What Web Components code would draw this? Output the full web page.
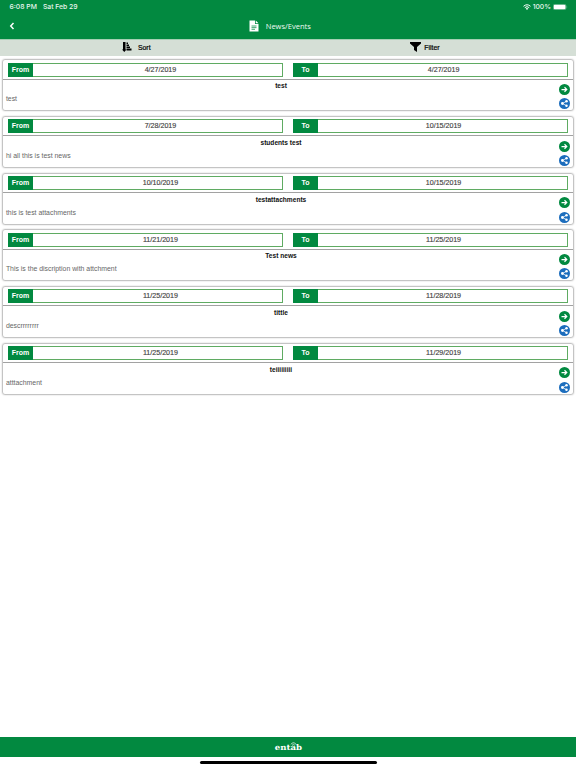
<!DOCTYPE html>
<html lang="en">
<head>
<meta charset="utf-8">
<title>News/Events</title>
<style>
  html, body {
    margin: 0;
    height: 768px;
    overflow: hidden;
    background: white;
    font-family: "Liberation Sans", Arial, sans-serif;
  }
</style>
</head>
<body>

<news-app>
  <status-bar slot="top" time="6:08 PM" date="Sat Feb 29" battery="100%"></status-bar>
  <title-bar slot="top">News/Events</title-bar>
  <tool-bar slot="top"></tool-bar>
  <news-card from="4/27/2019" to="4/27/2019" titulo="test">test</news-card>
  <news-card from="7/28/2019" to="10/15/2019" titulo="students test">hi all this is test news</news-card>
  <news-card from="10/10/2019" to="10/15/2019" titulo="testattachments">this is test attachments</news-card>
  <news-card from="11/21/2019" to="11/25/2019" titulo="Test news">This is the discription with attchment</news-card>
  <news-card from="11/25/2019" to="11/28/2019" titulo="tittle">descrrrrrrrr</news-card>
  <news-card from="11/25/2019" to="11/29/2019" titulo="teiiiiiiiii">atttachment</news-card>
  <brand-footer slot="bottom"></brand-footer>
</news-app>

<template id="news-app">
  <slot name="top"></slot>
  <main><slot></slot></main>
  <slot name="bottom"></slot>
  <style>
    :host {
      display: flex;
      flex-direction: column;
      height: 768px;
    }
    main {
      flex: 1;
      display: flex;
      flex-direction: column;
      gap: 4.7px;
      padding: 3.9px 2.4px 0;
    }
  </style>
</template>

<template id="status-bar">
  <span id="time"></span>
  <span id="date"></span>
  <svg class="wifi" viewBox="0 0 16 12" width="8" height="6">
    <path d="M1 4.6Q8-1.6 15 4.6M3.6 7.2Q8 3.4 12.4 7.2" fill="none" stroke="white" stroke-width="2"/>
    <path d="M5.4 9Q8 6.9 10.6 9L8 11.8z" fill="white"/>
  </svg>
  <span id="battery"></span>
  <svg viewBox="0 0 30 12" width="15" height="6">
    <rect x=".5" y=".5" width="25.5" height="11" rx="3" fill="none" stroke="#8fc9a8"/>
    <rect x="1.5" y="1.5" width="23.5" height="9" rx="2" fill="white"/>
    <path d="M27.5 4q2 2 0 4z" fill="#8fc9a8"/>
  </svg>
  <style>
    :host {
      display: flex;
      align-items: center;
      box-sizing: border-box;
      height: 14px;
      padding: 0 8px 0 9.5px;
      background: #028940;
      color: #e9f6ee;
      font: 500 6.8px/14px Inter, sans-serif;
    }
    #date { margin-left: 6px; }
    .wifi { margin-left: auto; }
    #battery { margin: 0 2px; }
  </style>
</template>

<template id="title-bar">
  <svg class="back" viewBox="0 0 12 16" width="6" height="8">
    <path d="M9 2L3.5 8L9 14" fill="none" stroke="white" stroke-width="3"/>
  </svg>
  <div>
    <svg viewBox="0 0 20 24" width="10" height="12">
      <path d="M1 1h11v7h7v15H1z" fill="white"/>
      <path d="M13.5 1L19 6.5h-5.5z" fill="white"/>
      <path d="M5 12h10M5 15.3h10M5 18.6h7" stroke="#028940" stroke-width="1.5"/>
    </svg>
    <slot></slot>
  </div>
  <style>
    :host {
      display: grid;
      grid-template-columns: 1fr auto 1fr;
      align-items: center;
      box-sizing: border-box;
      height: 24.5px;
      padding: 0 25px 0 9px;
      background: #028940;
      color: #f1faf4;
      font: 7.5px/24px "Open Sans", sans-serif;
    }
    div {
      display: flex;
      align-items: center;
      gap: 6.5px;
    }
  </style>
</template>

<template id="tool-bar">
  <div class="sort">
    <svg viewBox="0 0 20 20" width="10" height="10">
      <path d="M2 0h5v15h2l-4.5 5L0 15h2z"/>
      <path d="M9 1h3v3H9zM9 5h5v3H9zM9 9h7v3H9zM9 13h10v4H9z"/>
    </svg>
    Sort
  </div>
  <div class="filter">
    <svg viewBox="0 0 22 20" width="11" height="10">
      <path d="M0 0h22v3l-8 7v10l-6-4v-6L0 3z"/>
    </svg>
    Filter
  </div>
  <style>
    :host {
      display: grid;
      grid-template-columns: 1fr 1fr;
      box-sizing: border-box;
      height: 17px;
      background: #d5dfd6;
      border-top: 1px solid #a5cfb3;
      color: black;
      font-size: 6.9px;
      -webkit-text-stroke: .2px;
    }
    div {
      display: flex;
      align-items: center;
      justify-content: center;
      padding-bottom: 1px;
    }
    .sort { padding-right: 15px; gap: 5.5px; }
    .filter { padding-right: 14.5px; gap: 3.5px; }
  </style>
</template>

<template id="news-card">
  <header>
    <div class="field"><b>From</b><span id="from"></span></div>
    <div class="field"><b>To</b><span id="to"></span></div>
  </header>
  <section>
    <div class="text">
      <h2></h2>
      <p><slot></slot></p>
    </div>
    <div class="actions">
      <svg viewBox="0 0 22 22" width="11" height="11">
        <circle cx="11" cy="11" r="11" fill="#028940"/>
        <path d="M5 11h10M11 6.5l4.5 4.5L11 15.5" fill="none" stroke="white" stroke-width="2.5"/>
      </svg>
      <svg viewBox="0 0 22 22" width="11" height="11">
        <circle cx="11" cy="11" r="11" fill="#1c6dbd"/>
        <path d="M15 6.5L7 11l8 4.5" fill="none" stroke="white" stroke-width="1.5"/>
        <g fill="white"><circle cx="6.8" cy="11" r="2.8"/><circle cx="15" cy="6.5" r="2.5"/><circle cx="15" cy="15.5" r="2.5"/></g>
      </svg>
    </div>
  </section>
  <style>
    :host {
      display: block;
      box-sizing: border-box;
      height: 52px;
      border: 1px solid #c4c4c4;
      border-radius: 3px;
      box-shadow: 0 0 1.5px #bbb;
    }
    header {
      display: grid;
      grid-template-columns: 1fr 1fr;
      gap: 10px;
      box-sizing: border-box;
      height: 19.3px;
      padding: 2.3px 4.5px 2.5px;
      border-bottom: 1px solid #a2a2a2;
    }
    .field {
      display: flex;
      box-sizing: border-box;
      height: 14px;
      border: 1px solid #5fab62;
      font-size: 7px;
      line-height: 12px;
      text-align: center;
    }
    b {
      width: 25px;
      margin: -1px 0 -1px -1px;
      padding-top: 1px;
      background: #028940;
      color: white;
    }
    span {
      flex: 1;
      color: #444;
      font-size: 7.1px;
      -webkit-text-stroke: .15px;
    }
    #from { padding-left: 6px; }
    #to { padding-left: 2px; }
    section {
      display: flex;
      height: 30.7px;
    }
    .text {
      flex: 1;
      padding-left: 2.5px;
    }
    h2 {
      margin: 2.5px 2.5px 0 0;
      font-size: 6.6px;
      line-height: 8px;
      text-align: center;
      color: #111;
    }
    p {
      margin: 5px 0 0;
      font-size: 6.9px;
      line-height: 8px;
      color: #666;
    }
    .actions {
      display: flex;
      flex-direction: column;
      gap: 3.5px;
      padding: 4.2px 3px 0 0;
    }
    svg { display: block; }
  </style>
</template>

<template id="brand-footer">
  <div class="brand">
    <span>ent<i>a<svg viewBox="0 0 12 8" width="6" height="4"><path d="M1 5Q6-2 11 5M3.5 6.5Q6 3 8.5 6.5" fill="none" stroke="white" stroke-width="1.3"/></svg></i>b</span>
  </div>
  <div class="home"><div></div></div>
  <style>
    :host { display: block; }
    .brand {
      height: 19.5px;
      background: #028940;
      color: white;
      text-align: center;
      font: bold 7.8px/21px "DejaVu Serif", serif;
    }
    span {
      display: inline-block;
      transform: scaleX(1.1);
    }
    i {
      position: relative;
      font-style: normal;
    }
    svg {
      position: absolute;
      left: 0;
      top: -1px;
    }
    .home {
      display: flex;
      justify-content: center;
      height: 11.5px;
    }
    .home div {
      width: 177px;
      height: 3px;
      margin-top: 4px;
      border-radius: 2px;
      background: black;
    }
  </style>
</template>

<script>
  class Base extends HTMLElement {
    constructor() {
      super();
      let template = document.getElementById(this.localName);
      this.attachShadow({ mode: 'open' }).appendChild(template.content.cloneNode(true));
    }

    _fill(selector, attribute) {
      this.shadowRoot.querySelector(selector).textContent = this.getAttribute(attribute);
    }
  }

  window.customElements.define('news-app', class extends Base {});
  window.customElements.define('title-bar', class extends Base {});
  window.customElements.define('tool-bar', class extends Base {});
  window.customElements.define('brand-footer', class extends Base {});

  window.customElements.define('status-bar', class extends Base {
    connectedCallback() {
      this._fill('#time', 'time');
      this._fill('#date', 'date');
      this._fill('#battery', 'battery');
    }
  });

  window.customElements.define('news-card', class extends Base {
    connectedCallback() {
      this._fill('#from', 'from');
      this._fill('#to', 'to');
      this._fill('h2', 'titulo');
    }
  });
</script>
</body>
</html>
